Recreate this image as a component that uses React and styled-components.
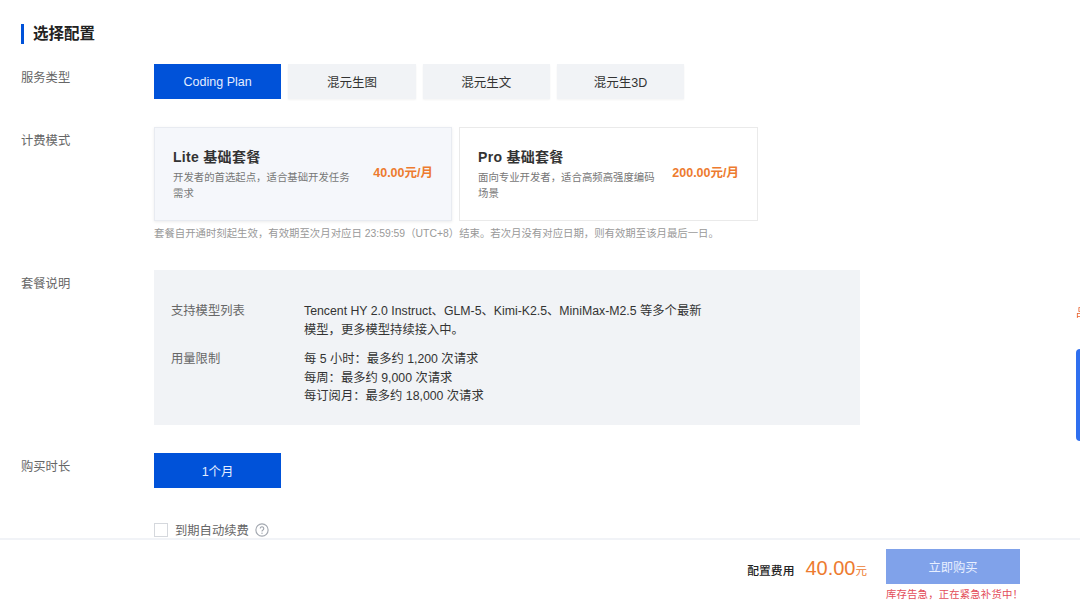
import React from "react";
import styled, { createGlobalStyle } from "styled-components";

const GlobalStyle = createGlobalStyle`
  html, body {
    margin: 0;
    padding: 0;
    height: 100%;
    overflow: hidden;
    background: #fff;
  }
  body {
    font-family: "Liberation Sans", "Noto Sans CJK SC", sans-serif;
    color: #333;
  }
`;

const Page = styled.div`
  padding: 24px 0 0 21px;
`;

const Title = styled.h2`
  margin: 0 0 20px;
  height: 20px;
  padding-left: 9px;
  border-left: 3.5px solid #0052d9;
  font-size: 15.5px;
  line-height: 20px;
  font-weight: 700;
  color: #222;
`;

const Row = styled.div`
  display: grid;
  grid-template-columns: 133px 1fr;
  margin-bottom: ${(p) => p.$gap || 0}px;
`;

const Label = styled.div`
  font-size: 12.3px;
  line-height: 18px;
  color: #666;
  padding-top: ${(p) => p.$top || 0}px;
`;

const Tabs = styled.div`
  display: flex;
  gap: 7px;
`;

const Tab = styled.div`
  width: 127.3px;
  height: 35px;
  display: flex;
  align-items: center;
  justify-content: center;
  font-size: 12.5px;
  background: ${(p) => (p.$active ? "#0052d9" : "#f1f3f6")};
  color: ${(p) => (p.$active ? "#e4edff" : "#333")};
  box-shadow: ${(p) => (p.$active ? "none" : "0 1px 2px rgba(0,0,0,0.05)")};
`;

const Plans = styled.div`
  display: flex;
  gap: 7px;
`;

const Plan = styled.div`
  box-sizing: border-box;
  width: ${(p) => (p.$active ? 298 : 299)}px;
  height: 94px;
  padding: 20px 18px 0;
  display: flex;
  justify-content: space-between;
  border: 1px solid ${(p) => (p.$active ? "#e8ebf1" : "#eaeaea")};
  background: ${(p) => (p.$active ? "#f5f7fb" : "#fff")};
  box-shadow: ${(p) => (p.$active ? "0 1px 3px rgba(0,0,0,0.08)" : "none")};
`;

const PlanInfo = styled.div`
  width: 182px;
`;

const PlanName = styled.div`
  font-size: 14px;
  line-height: 18px;
  font-weight: 700;
  letter-spacing: 0.3px;
  color: #333;
`;

const PlanDesc = styled.div`
  margin-top: 4px;
  font-size: 10.4px;
  line-height: 16px;
  color: #777;
`;

const PlanPrice = styled.div`
  margin-top: 16px;
  white-space: nowrap;
  font-size: 12.5px;
  line-height: 18px;
  font-weight: 700;
  color: #ed7b2f;
`;

const Note = styled.div`
  margin-top: 6px;
  font-size: 10.4px;
  line-height: 14px;
  color: #999;
  white-space: nowrap;
`;

const InfoPanel = styled.div`
  box-sizing: border-box;
  width: 706px;
  height: 155px;
  padding: 32px 17px 0;
  background: #f1f3f6;
`;

const InfoRow = styled.div`
  display: grid;
  grid-template-columns: 133px 400px;
  margin-bottom: ${(p) => p.$gap || 0}px;
`;

const InfoLabel = styled.div`
  font-size: 12.3px;
  line-height: 18px;
  color: #666;
`;

const InfoText = styled.div`
  font-size: 12.3px;
  line-height: 18.5px;
  color: #333;
`;

const CheckRow = styled.div`
  display: flex;
  align-items: center;
  margin-top: 35px;
  height: 14px;
`;

const CheckBox = styled.span`
  box-sizing: border-box;
  width: 14px;
  height: 14px;
  border: 1px solid #d5d8dd;
  background: #fff;
`;

const CheckLabel = styled.span`
  margin-left: 7px;
  font-size: 12.3px;
  color: #666;
`;

const HelpIcon = styled.svg`
  margin-left: 6px;
  width: 14px;
  height: 14px;
`;

const Footer = styled.div`
  position: fixed;
  left: 0;
  right: 0;
  bottom: 0;
  height: 67px;
  box-sizing: border-box;
  padding: 9px 60px 0 0;
  display: flex;
  justify-content: flex-end;
  background: #fff;
  border-top: 2px solid #f1f3f7;
`;

const Cost = styled.div`
  display: flex;
  align-items: baseline;
  height: 35px;
  padding-top: 8px;
  box-sizing: border-box;
`;

const CostLabel = styled.span`
  font-size: 11.8px;
  font-weight: 500;
  color: #222;
  margin-right: 11px;
`;

const CostValue = styled.span`
  font-size: 20px;
  color: #ed7b2f;
`;

const CostUnit = styled.span`
  font-size: 11.5px;
  color: #ed7b2f;
`;

const BuyColumn = styled.div`
  width: 134px;
  margin-left: 19px;
`;

const BuyButton = styled.div`
  height: 35px;
  display: flex;
  align-items: center;
  justify-content: center;
  font-size: 12.3px;
  color: #e8efff;
  background: #80a2ea;
`;

const Warning = styled.div`
  margin-top: 4px;
  font-size: 10.4px;
  line-height: 14px;
  letter-spacing: 0.15px;
  text-align: center;
  white-space: nowrap;
  color: #e34d59;
`;

const SideMark = styled.div`
  position: fixed;
  top: 306px;
  right: -7px;
  width: 11px;
  font-size: 11px;
  line-height: 14px;
  color: #e8602c;
`;

const SideTab = styled.div`
  position: fixed;
  top: 349px;
  right: 0;
  width: 4px;
  height: 92px;
  border-radius: 6px 0 0 6px;
  background: #2f6fef;
`;

export default function App() {
  return (
    <>
      <GlobalStyle />
      <Page>
        <Title>选择配置</Title>

        <Row $gap={28}>
          <Label $top={5}>服务类型</Label>
          <Tabs>
            <Tab $active>Coding Plan</Tab>
            <Tab>混元生图</Tab>
            <Tab>混元生文</Tab>
            <Tab>混元生3D</Tab>
          </Tabs>
        </Row>

        <Row $gap={29}>
          <Label $top={5}>计费模式</Label>
          <div>
            <Plans>
              <Plan $active>
                <PlanInfo>
                  <PlanName>Lite 基础套餐</PlanName>
                  <PlanDesc>开发者的首选起点，适合基础开发任务需求</PlanDesc>
                </PlanInfo>
                <PlanPrice>40.00元/月</PlanPrice>
              </Plan>
              <Plan>
                <PlanInfo>
                  <PlanName>Pro 基础套餐</PlanName>
                  <PlanDesc>面向专业开发者，适合高频高强度编码场景</PlanDesc>
                </PlanInfo>
                <PlanPrice>200.00元/月</PlanPrice>
              </Plan>
            </Plans>
            <Note>
              套餐自开通时刻起生效，有效期至次月对应日 23:59:59（UTC+8）结束。若次月没有对应日期，则有效期至该月最后一日。
            </Note>
          </div>
        </Row>

        <Row $gap={28}>
          <Label $top={5}>套餐说明</Label>
          <InfoPanel>
            <InfoRow $gap={11}>
              <InfoLabel>支持模型列表</InfoLabel>
              <InfoText>
                Tencent HY 2.0 Instruct、GLM-5、Kimi-K2.5、MiniMax-M2.5 等多个最新模型，更多模型持续接入中。
              </InfoText>
            </InfoRow>
            <InfoRow>
              <InfoLabel>用量限制</InfoLabel>
              <InfoText>
                每 5 小时：最多约 1,200 次请求
                <br />
                每周：最多约 9,000 次请求
                <br />
                每订阅月：最多约 18,000 次请求
              </InfoText>
            </InfoRow>
          </InfoPanel>
        </Row>

        <Row>
          <Label $top={5}>购买时长</Label>
          <div>
            <Tab $active>1个月</Tab>
            <CheckRow>
              <CheckBox />
              <CheckLabel>到期自动续费</CheckLabel>
              <HelpIcon viewBox="0 0 16 16" fill="none">
                <circle cx="8" cy="8" r="7" stroke="#a3a8b0" strokeWidth="1.3" />
                <path
                  d="M6 6.3a2 2 0 1 1 3.1 1.7c-.7.4-1.1.8-1.1 1.6"
                  stroke="#a3a8b0"
                  strokeWidth="1.3"
                />
                <circle cx="8" cy="11.7" r="0.8" fill="#a3a8b0" />
              </HelpIcon>
            </CheckRow>
          </div>
        </Row>
      </Page>

      <SideMark>品</SideMark>
      <SideTab />

      <Footer>
        <Cost>
          <CostLabel>配置费用</CostLabel>
          <CostValue>40.00</CostValue>
          <CostUnit>元</CostUnit>
        </Cost>
        <BuyColumn>
          <BuyButton>立即购买</BuyButton>
          <Warning>库存告急，正在紧急补货中！</Warning>
        </BuyColumn>
      </Footer>
    </>
  );
}
